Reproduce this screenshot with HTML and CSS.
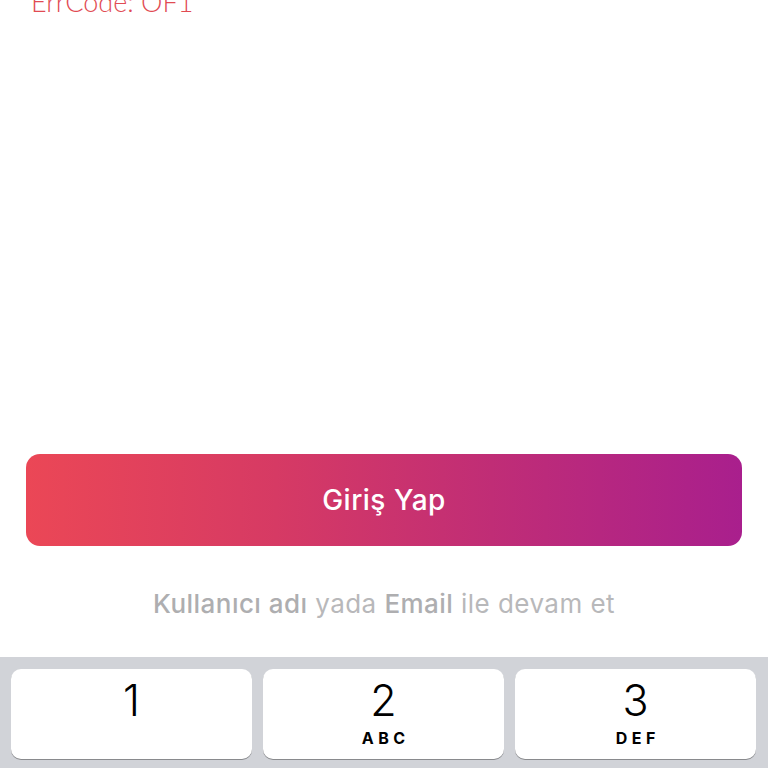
FILE: index.html
```html
<!DOCTYPE html>
<html lang="tr">
<head>
<meta charset="utf-8">
<link rel="stylesheet" href="styles.css">
</head>
<body>
<div class="screen">
  <div class="err">ErrCode: OF1</div>
  <div class="content">
    <div class="btn">Giriş Yap</div>
    <div class="hint"><span class="strong">Kullanıcı adı</span> yada <span class="strong">Email</span> ile devam et</div>
  </div>
  <div class="keyboard">
    <div class="key"><span class="digit">1</span><span class="letters"></span></div>
    <div class="key"><span class="digit">2</span><span class="letters">ABC</span></div>
    <div class="key"><span class="digit">3</span><span class="letters">DEF</span></div>
  </div>
</div>
</body>
</html>
```
FILE: styles.css
```css
html, body {
  margin: 0;
  padding: 0;
  background: #ffffff;
}
.screen {
  width: 768px;
  height: 768px;
  display: flex;
  flex-direction: column;
  overflow: hidden;
  font-family: Inter, Roboto, "Liberation Sans", sans-serif;
}
.err {
  margin-top: -14px;
  padding-left: 31px;
  font-family: Lato, "Liberation Sans", sans-serif;
  font-weight: 300;
  font-size: 27px;
  line-height: 32px;
  color: #e14b53;
}
.content {
  margin-top: auto;
  padding: 0 26px;
}
.btn {
  height: 92px;
  border-radius: 14px;
  background: linear-gradient(90deg, #eb4756 0%, #d63a64 35%, #c02d76 65%, #a91f8d 100%);
  color: #ffffff;
  display: flex;
  align-items: center;
  justify-content: center;
  font-size: 28px;
  letter-spacing: 0.5px;
  font-weight: 500;
}
.hint {
  height: 111px;
  padding-top: 3px;
  box-sizing: border-box;
  display: flex;
  align-items: center;
  justify-content: center;
  font-size: 26px;
  letter-spacing: 0.45px;
  color: #b8b8ba;
  white-space: pre;
}
.strong {
  font-weight: 500;
  color: #aeaeb0;
}
.keyboard {
  height: 111px;
  background: #d1d3d8;
  display: grid;
  grid-template-columns: repeat(3, 1fr);
  gap: 11px;
  padding: 12px 12px 0 11px;
  box-sizing: border-box;
}
.key {
  height: 90px;
  background: #ffffff;
  border-radius: 10px;
  box-shadow: 0 1px 0 #898a8d;
  display: flex;
  flex-direction: column;
  align-items: center;
}
.digit {
  margin-top: 8px;
  font-size: 43px;
  line-height: 46px;
  font-weight: 300;
  color: #000000;
}
.letters {
  margin-top: 6px;
  font-size: 16px;
  line-height: 18px;
  font-weight: 700;
  letter-spacing: 4.5px;
  padding-left: 4.5px;
  color: #000000;
}
```
